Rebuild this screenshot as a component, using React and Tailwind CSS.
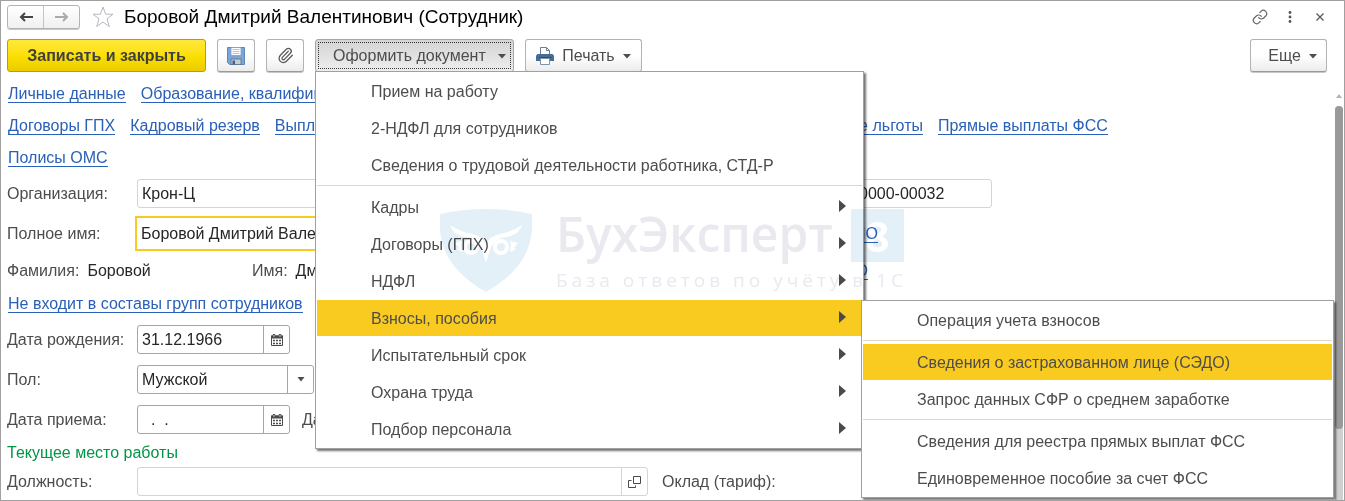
import React from 'react';
import { Link as LinkIcon, Paperclip } from 'lucide-react';

const BTN = 'flex h-[33px] items-center justify-center rounded-[3px] border border-[#b3b3b3] border-b-[#9a9a9a] bg-linear-to-b from-white from-50% to-[#ececec] text-[#4d4d4d] shadow-[0_1px_0_#c8c8c8]';

const documentMenu = [
  { label: 'Прием на работу' },
  { label: '2-НДФЛ для сотрудников' },
  { label: 'Сведения о трудовой деятельности работника, СТД-Р' },
  { separator: true },
  { label: 'Кадры', more: true },
  { label: 'Договоры (ГПХ)', more: true },
  { label: 'НДФЛ', more: true },
  {
    label: 'Взносы, пособия',
    more: true,
    active: true,
    children: [
      { label: 'Операция учета взносов' },
      { separator: true },
      { label: 'Сведения о застрахованном лице (СЭДО)', active: true },
      { label: 'Запрос данных СФР о среднем заработке' },
      { separator: true },
      { label: 'Сведения для реестра прямых выплат ФСС' },
      { label: 'Единовременное пособие за счет ФСС' },
    ],
  },
  { label: 'Испытательный срок', more: true },
  { label: 'Охрана труда', more: true },
  { label: 'Подбор персонала', more: true },
];

function Caret() {
  return (
    <svg width="8" height="5" viewBox="0 0 8 5" className="mt-0.5 shrink-0" aria-hidden="true">
      <path d="M0 0h8L4 4.5z" fill="#4d4d4d" />
    </svg>
  );
}

function SaveIcon() {
  return (
    <svg width="18" height="18" viewBox="0 0 18 18" aria-hidden="true">
      <path d="M.5.5h17v17H2.500l-2-2z" fill="#7ba6d6" stroke="#5b88bb" />
      <path d="M4 .5h10v8H4z" fill="#fff" stroke="#6f98c6" strokeWidth=".7" />
      <path d="M5.500 2.500h7M5.500 4.500h7M5.500 6.500h7" stroke="#b3c6dc" />
      <path d="M4 12h10v5.500H4z" fill="#c5ccd4" stroke="#566f8c" strokeWidth=".8" />
      <path d="M5.500 13.500H8v4H5.500z" fill="#3f648c" />
    </svg>
  );
}

function PrintIcon() {
  return (
    <svg width="18" height="18" viewBox="0 0 18 18" aria-hidden="true">
      <path d="M4.500 8V.5h6l3 3V8" fill="#fff" stroke="#6a7f96" />
      <path d="M10.500.5v3h3" fill="none" stroke="#6a7f96" />
      <path d="M1.500 7h15l1.500 1.500V14H0V8.500z" fill="#456d98" />
      <path d="M2.500 10.500h13" stroke="#2d4f75" />
      <path d="M4.500 11.500h9v6h-9z" fill="#fff" stroke="#7d93aa" />
    </svg>
  );
}

function CalendarIcon() {
  return (
    <svg width="12" height="12" viewBox="0 0 12 12" aria-hidden="true">
      <path d="M.5 2h11v9.500H.5z" fill="#fff" stroke="#4a4a4a" />
      <path d="M0 1.500h12V4.500H0z" fill="#4a4a4a" />
      <path d="M3 0v3M9 0v3" stroke="#4a4a4a" strokeWidth="2.400" />
      <path d="M3 .8v2M9 .8v2" stroke="#fff" strokeWidth=".8" />
      <path d="M2 6.500h2M5 6.500h2M8 6.500h2M2 9.500h2M5 9.500h2M8 9.500h2" stroke="#4a4a4a" strokeWidth="1.500" />
    </svg>
  );
}

function MenuList({ items, className }) {
  return (
    <ul role="menu" className={`absolute z-10 border border-[#a0a0a0] bg-white p-px text-[#4d4d4d] shadow-[2px_2px_2px_rgba(0,0,0,0.55)] ${className}`}>
      {items.map((item, i) =>
        item.separator ? (
          <li key={i} role="separator" className="h-[5px] pt-px">
            <div className="h-px bg-[#dcd9cb]" />
          </li>
        ) : (
          <li key={i} role="none" className="relative pb-px last:pb-0">
            <button
              type="button"
              role="menuitem"
              className={`flex h-9 w-full items-center justify-between pt-0.5 pr-4 pl-[54px] text-left whitespace-nowrap ${item.active ? 'bg-[#f9cb20]' : ''}`}
            >
              {item.label}
              {item.more && (
                <svg width="7" height="12" viewBox="0 0 7 12" className="mb-1" aria-hidden="true">
                  <path d="M0 0l7 6-7 6z" fill="#4a4a4a" />
                </svg>
              )}
            </button>
            {item.children && <MenuList items={item.children} className="top-0 left-full -ml-px w-[473px]" />}
          </li>
        )
      )}
    </ul>
  );
}

function FormLink({ children }) {
  return (
    <a href="#" className="border-b border-[#2a60b8] leading-[17px] whitespace-nowrap text-[#2a60b8]">
      {children}
    </a>
  );
}

function Label({ id, children }) {
  return (
    <label htmlFor={id} className="w-[130px] shrink-0 whitespace-nowrap text-[#4d4d4d]">
      {children}
    </label>
  );
}

function DateField({ id, value, label }) {
  return (
    <div className="flex h-[29px] w-[153px] overflow-hidden rounded-[3px] border border-[#a6a6a6]">
      <input id={id} defaultValue={value} className="w-0 grow px-1 whitespace-pre text-[#262626] outline-none" />
      <button type="button" aria-label={label} className="flex w-[26px] items-center justify-center border-l border-[#a6a6a6]">
        <CalendarIcon />
      </button>
    </div>
  );
}

function Watermark() {
  return (
    <div className="pointer-events-none absolute top-[208px] left-[439px] z-20 flex mix-blend-multiply select-none" aria-hidden="true">
      <svg width="92" height="83" viewBox="0 0 92 83" className="shrink-0">
        <path d="M0 5Q46-5 92 5V20Q90 58 46 83Q2 58 0 20z" fill="#e3f0f8" />
        <path d="M10 16Q20 23 32 25Q43 27 46 36Q49 27 60 25Q72 23 82 16Q79 26 66 28Q54 29 50 41L46 54L42 41Q38 29 26 28Q13 26 10 16z" fill="#fff" />
        <circle cx="31" cy="38" r="6" fill="none" stroke="#fff" strokeWidth="4" />
        <circle cx="61" cy="38" r="6" fill="none" stroke="#fff" strokeWidth="4" />
        <path d="M14 34l8-2-1 4 1 7-4-2 1-3zM78 34l-8-2 1 4-1 7 6-3-2-1z" fill="#fff" />
      </svg>
      <div className="ml-6 w-[348px] font-['Open_Sans',sans-serif] text-[#e9e9ef]">
        <div className="flex items-start justify-between">
          <span className="text-[48px] leading-[50px] font-semibold">БухЭксперт</span>
          <span className="flex size-[53px] items-center justify-center bg-[#e3f0f8] text-[42px] font-bold text-white">8</span>
        </div>
        <div className="mt-1 text-[19px] leading-7 font-medium tracking-[4px] whitespace-nowrap">База ответов по учёту в 1С</div>
      </div>
    </div>
  );
}

export default function App() {
  return (
    <div className="relative flex min-h-screen flex-col overflow-hidden border border-[#a0a0a0] bg-white font-['Liberation_Sans',Arial,sans-serif] text-[16px] leading-5">
      <header className="flex h-8 items-center pr-4 pl-1.5">
        <div className="flex h-6 w-[73px] overflow-hidden rounded-[3px] border border-[#b3b3b3] bg-linear-to-b from-white to-[#f0f0f0] shadow-[0_1px_0_#c8c8c8]">
          <button type="button" aria-label="Назад" className="flex flex-1 items-center justify-center border-r border-[#c4c4c4]">
            <svg width="14" height="10" viewBox="0 0 14 10" fill="none" stroke="#444" strokeWidth="2">
              <path d="M14 5H3M6 1L2 5l4 4" />
            </svg>
          </button>
          <button type="button" aria-label="Вперед" className="flex flex-1 items-center justify-center">
            <svg width="14" height="10" viewBox="0 0 14 10" fill="none" stroke="#aaa" strokeWidth="2">
              <path d="M0 5h11M8 1l4 4-4 4" />
            </svg>
          </button>
        </div>
        <button type="button" aria-label="В избранное" className="ml-3">
          <svg width="22" height="22" viewBox="0 0 22 22" fill="#fff" stroke="#b4b8be" strokeWidth="1">
            <path d="M11 1l2.600 7.200H21l-6 4.600 2.300 7.700L11 16l-6.300 4.500L7 12.800 1 8.200h7.400z" />
          </svg>
        </button>
        <h1 className="ml-2.5 text-[19px] whitespace-nowrap text-black">Боровой Дмитрий Валентинович (Сотрудник)</h1>
        <div className="ml-auto flex items-center gap-3.5">
          <button type="button" aria-label="Получить ссылку">
            <LinkIcon size={16} strokeWidth={1.8} color="#666" />
          </button>
          <button type="button" aria-label="Дополнительно" className="flex w-4 justify-center">
            <svg width="4" height="12" viewBox="0 0 4 12" fill="#555">
              <circle cx="2" cy="1.500" r="1.400" />
              <circle cx="2" cy="6" r="1.400" />
              <circle cx="2" cy="10.500" r="1.400" />
            </svg>
          </button>
          <button type="button" aria-label="Закрыть" className="flex w-4 justify-center">
            <svg width="8" height="8" viewBox="0 0 8 8" stroke="#555" strokeWidth="1.200">
              <path d="M.5.5l7 7M7.500.5l-7 7" />
            </svg>
          </button>
        </div>
      </header>

      <div className="mt-1.5 flex gap-[11px] pr-[17px] pl-1.5">
        <button type="button" className="h-[33px] w-[199px] rounded-[3px] border border-[#b89f00] bg-linear-to-b from-[#ffe838] via-[#fce000] to-[#eccb00] font-bold whitespace-nowrap text-[#404040]">
          Записать и закрыть
        </button>
        <button type="button" aria-label="Записать" className={`${BTN} w-[38px]`}>
          <SaveIcon />
        </button>
        <button type="button" aria-label="Присоединенные файлы" className={`${BTN} w-[38px]`}>
          <Paperclip size={17} strokeWidth={1.8} color="#5a5a5a" />
        </button>
        <div className="relative">
          <button type="button" aria-haspopup="menu" aria-expanded="true" className="h-[33px] w-[199px] rounded-[3px] border border-[#a6a6a6] bg-linear-to-b from-[#d4d4d4] to-[#eeeeee] p-0.5 text-[#4d4d4d]">
            <span className="flex h-full items-center justify-between border border-dotted border-[#333] pr-1 pl-3.5 whitespace-nowrap">
              Оформить документ
              <Caret />
            </span>
          </button>
          <MenuList items={documentMenu} className="top-8 left-0 w-[549px]" />
        </div>
        <button type="button" className={`${BTN} w-[117px] gap-2`}>
          <PrintIcon />
          <span>Печать</span>
          <Caret />
        </button>
        <button type="button" className={`${BTN} ml-auto w-[77px] gap-2 pl-2`}>
          Еще
          <Caret />
        </button>
      </div>

      <div className="mt-1.5 flex grow">
        <main className="min-w-0 grow pb-1 pl-1.5">
          <nav className="pl-px">
            <div className="flex h-8 items-center gap-[15px]">
              <FormLink>Личные данные</FormLink>
              <FormLink>Образование, квалификация</FormLink>
            </div>
            <div className="flex h-8 items-center gap-[15px]">
              <div className="flex w-[915px] justify-between">
                <div className="flex gap-[15px]">
                  <FormLink>Договоры ГПХ</FormLink>
                  <FormLink>Кадровый резерв</FormLink>
                  <FormLink>Выплаты</FormLink>
                </div>
                <FormLink>Социальные льготы</FormLink>
              </div>
              <FormLink>Прямые выплаты ФСС</FormLink>
            </div>
            <div className="flex h-8 items-center">
              <FormLink>Полисы ОМС</FormLink>
            </div>
          </nav>

          <div className="mt-[5px] flex items-center">
            <Label id="org">Организация:</Label>
            <input id="org" defaultValue="Крон-Ц" className="h-[29px] w-[540px] rounded-[3px] border border-[#d4d4d4] px-1 text-[#262626]" />
            <label htmlFor="number" className="w-44 pl-4 whitespace-nowrap text-[#4d4d4d]">Табельный номер:</label>
            <input id="number" defaultValue="0000-00032" className="h-[29px] w-[139px] rounded-[3px] border border-[#d4d4d4] px-[5px] text-[#262626]" />
          </div>

          <div className="mt-2 flex w-[871px] items-center">
            <label htmlFor="fullname" className="w-32 shrink-0 text-[#4d4d4d]">Полное имя:</label>
            <input id="fullname" defaultValue="Боровой Дмитрий Валентинович" className="mr-auto h-[35px] w-[540px] border-2 border-[#f9cb20] px-1 text-[#262626] outline-none" />
            <FormLink>Изменить ФИО</FormLink>
          </div>

          <div className="mt-[3px] flex h-[33px] w-[861px] items-center">
            <div className="flex w-[245px] gap-2">
              <span className="text-[#4d4d4d]">Фамилия:</span>
              <span className="text-[#262626]">Боровой</span>
            </div>
            <div className="mr-auto flex gap-2">
              <span className="text-[#4d4d4d]">Имя:</span>
              <span className="text-[#262626]">Дмитрий</span>
            </div>
            <FormLink>История ФИО</FormLink>
          </div>

          <div className="flex h-[33px] items-center pl-px">
            <FormLink>Не входит в составы групп сотрудников</FormLink>
          </div>

          <div className="mt-[5px] flex flex-col gap-[11px]">
            <div className="flex items-center">
              <Label id="birth">Дата рождения:</Label>
              <DateField id="birth" value="31.12.1966" label="Выбрать дату рождения" />
            </div>
            <div className="flex items-center">
              <Label id="sex">Пол:</Label>
              <div className="grid h-[29px] w-[177px] grid-cols-[1fr_26px] overflow-hidden rounded-[3px] border border-[#a6a6a6]">
                <select id="sex" className="col-span-2 col-start-1 row-start-1 appearance-none px-1 text-[#262626] outline-none">
                  <option>Мужской</option>
                  <option>Женский</option>
                </select>
                <span className="pointer-events-none col-start-2 row-start-1 flex items-center justify-center border-l border-[#a6a6a6]">
                  <svg width="8" height="5" viewBox="0 0 8 5" aria-hidden="true">
                    <path d="M.5 0h7L4 4.500z" fill="#4d4d4d" />
                  </svg>
                </span>
              </div>
            </div>
            <div className="flex items-center">
              <Label id="hired">Дата приема:</Label>
              <DateField id="hired" value="  .  ." label="Выбрать дату приема" />
              <span className="pl-3 text-[#4d4d4d]">Дата увольнения:</span>
            </div>
          </div>

          <h2 className="flex h-[33px] items-end pb-1 text-[#009646]">Текущее место работы</h2>

          <div className="flex items-center">
            <Label id="position">Должность:</Label>
            <div className="flex h-[29px] w-[511px] rounded-[3px] border border-[#d4d4d4]">
              <input id="position" className="w-0 grow px-1 text-[#262626] outline-none" />
              <button type="button" aria-label="Открыть должность" className="flex w-[26px] items-center justify-center border-l border-[#d4d4d4]">
                <svg width="13" height="12" viewBox="0 0 13 12" fill="none" stroke="#4a4a4a">
                  <path d="M5.500.5h7v7h-7zM3.500 4.500h-3v7h7v-2" />
                </svg>
              </button>
            </div>
            <span className="pl-[14px] text-[#4d4d4d]">Оклад (тариф):</span>
          </div>
        </main>
        <div className="mr-px flex w-2 shrink-0 flex-col items-center pt-4" aria-hidden="true">
          <svg width="6" height="4" viewBox="0 0 6 4">
            <path d="M0 4h6L3 0z" fill="#b5b5b5" />
          </svg>
          <div className="mt-2 flex w-full grow flex-col rounded-t-full bg-[#d0d0d0]">
            <div className="h-[82%] rounded-full bg-[#999]" />
          </div>
        </div>
      </div>

      <Watermark />
    </div>
  );
}
